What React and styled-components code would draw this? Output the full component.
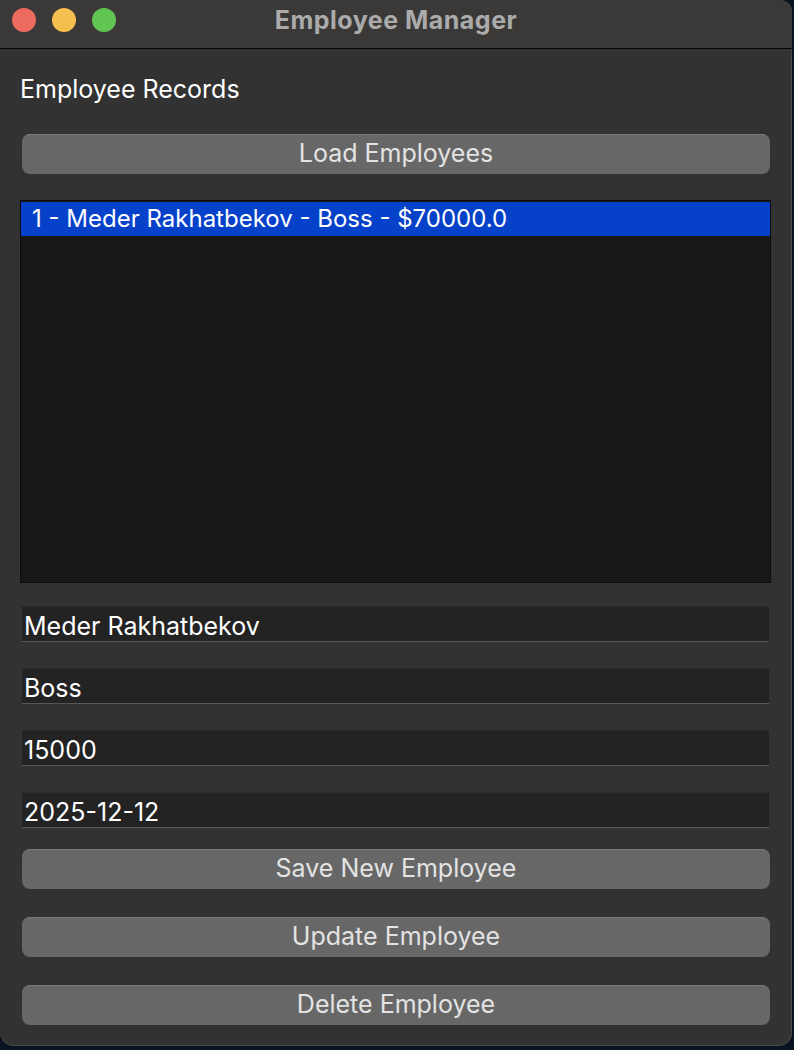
import React from 'react';
import styled, { createGlobalStyle } from 'styled-components';

const GlobalStyle = createGlobalStyle`
  html, body {
    margin: 0;
    padding: 0;
    background: #0b1322;
  }
  body {
    font-family: Inter, "Noto Sans", sans-serif;
  }
`;

const employees = [
  { id: 1, name: 'Meder Rakhatbekov', position: 'Boss', salary: '70000.0' },
];

const fields = ['Meder Rakhatbekov', 'Boss', '15000', '2025-12-12'];

const App = () => {
  return (
    <>
      <GlobalStyle />
      <Window>
        <TitleBar>
          <Lights>
            <Light color="#ec6a5e" />
            <Light color="#f4bf4f" />
            <Light color="#61c554" />
          </Lights>
          <Title>Employee Manager</Title>
        </TitleBar>
        <Content>
          <Heading>Employee Records</Heading>
          <Button $top={32}>Load Employees</Button>
          <List>
            {employees.map((e) => (
              <Row key={e.id} $selected>
                {e.id} - {e.name} - {e.position} - ${e.salary}
              </Row>
            ))}
          </List>
          <Fields>
            {fields.map((v) => (
              <Field key={v} defaultValue={v} />
            ))}
          </Fields>
          <Button $top={21}>Save New Employee</Button>
          <Button $top={28}>Update Employee</Button>
          <Button $top={28}>Delete Employee</Button>
        </Content>
      </Window>
    </>
  );
};

export default App;

const Window = styled.div`
  width: 792px;
  height: 1046px;
  background: #323232;
  border-radius: 0 12px 14px 14px;
  box-shadow: inset 0 -1px 0 #4a4a4a, inset -1px 0 0 #4a4a4a;
  overflow: hidden;
  display: flex;
  flex-direction: column;
`;

const TitleBar = styled.div`
  position: relative;
  height: 48px;
  background: #3a3938;
  border-bottom: 1px solid #050505;
  display: flex;
  align-items: center;
  justify-content: center;
`;

const Lights = styled.div`
  position: absolute;
  left: 12px;
  top: 8px;
  display: flex;
  gap: 16px;
`;

const Light = styled.span`
  width: 24px;
  height: 24px;
  border-radius: 50%;
  background: ${(p) => p.color};
`;

const Title = styled.div`
  font-size: 25px;
  font-weight: 700;
  letter-spacing: 0.5px;
  color: #ababab;
  margin-top: -8px;
`;

const Content = styled.div`
  display: flex;
  flex-direction: column;
  padding: 0 21px 0 20px;
`;

const Heading = styled.div`
  margin-top: 27px;
  height: 26px;
  line-height: 26px;
  font-size: 25px;
  color: #ffffff;
`;

const Button = styled.div`
  margin: ${(p) => p.$top}px 1px 0 2px;
  height: 40px;
  box-sizing: border-box;
  border-radius: 8px;
  background: #676767;
  border-top: 1px solid #7a7a7a;
  padding-bottom: 3px;
  display: flex;
  align-items: center;
  justify-content: center;
  font-size: 25px;
  color: #e3e3e3;
`;

const List = styled.div`
  margin-top: 26px;
  height: 383px;
  box-sizing: border-box;
  background: #181818;
  border: 1px solid #0c0c0c;
  padding: 1px 0 0;
`;

const Row = styled.div`
  height: 34px;
  line-height: 34px;
  padding-left: 11px;
  font-size: 24px;
  color: #ffffff;
  background: ${(p) => (p.$selected ? '#0541c9' : 'transparent')};
`;

const Fields = styled.div`
  margin-top: 23px;
  display: flex;
  flex-direction: column;
  gap: 26px;
  padding: 0 2px 0 2px;
`;

const Field = styled.input`
  height: 36px;
  box-sizing: border-box;
  border: none;
  border-top: 1px solid #2a2a2a;
  border-bottom: 1px solid #575757;
  background: #232323;
  color: #ffffff;
  font-family: Inter, "Noto Sans", sans-serif;
  font-size: 25px;
  padding: 3px 0 0 2px;
  outline: none;
`;
